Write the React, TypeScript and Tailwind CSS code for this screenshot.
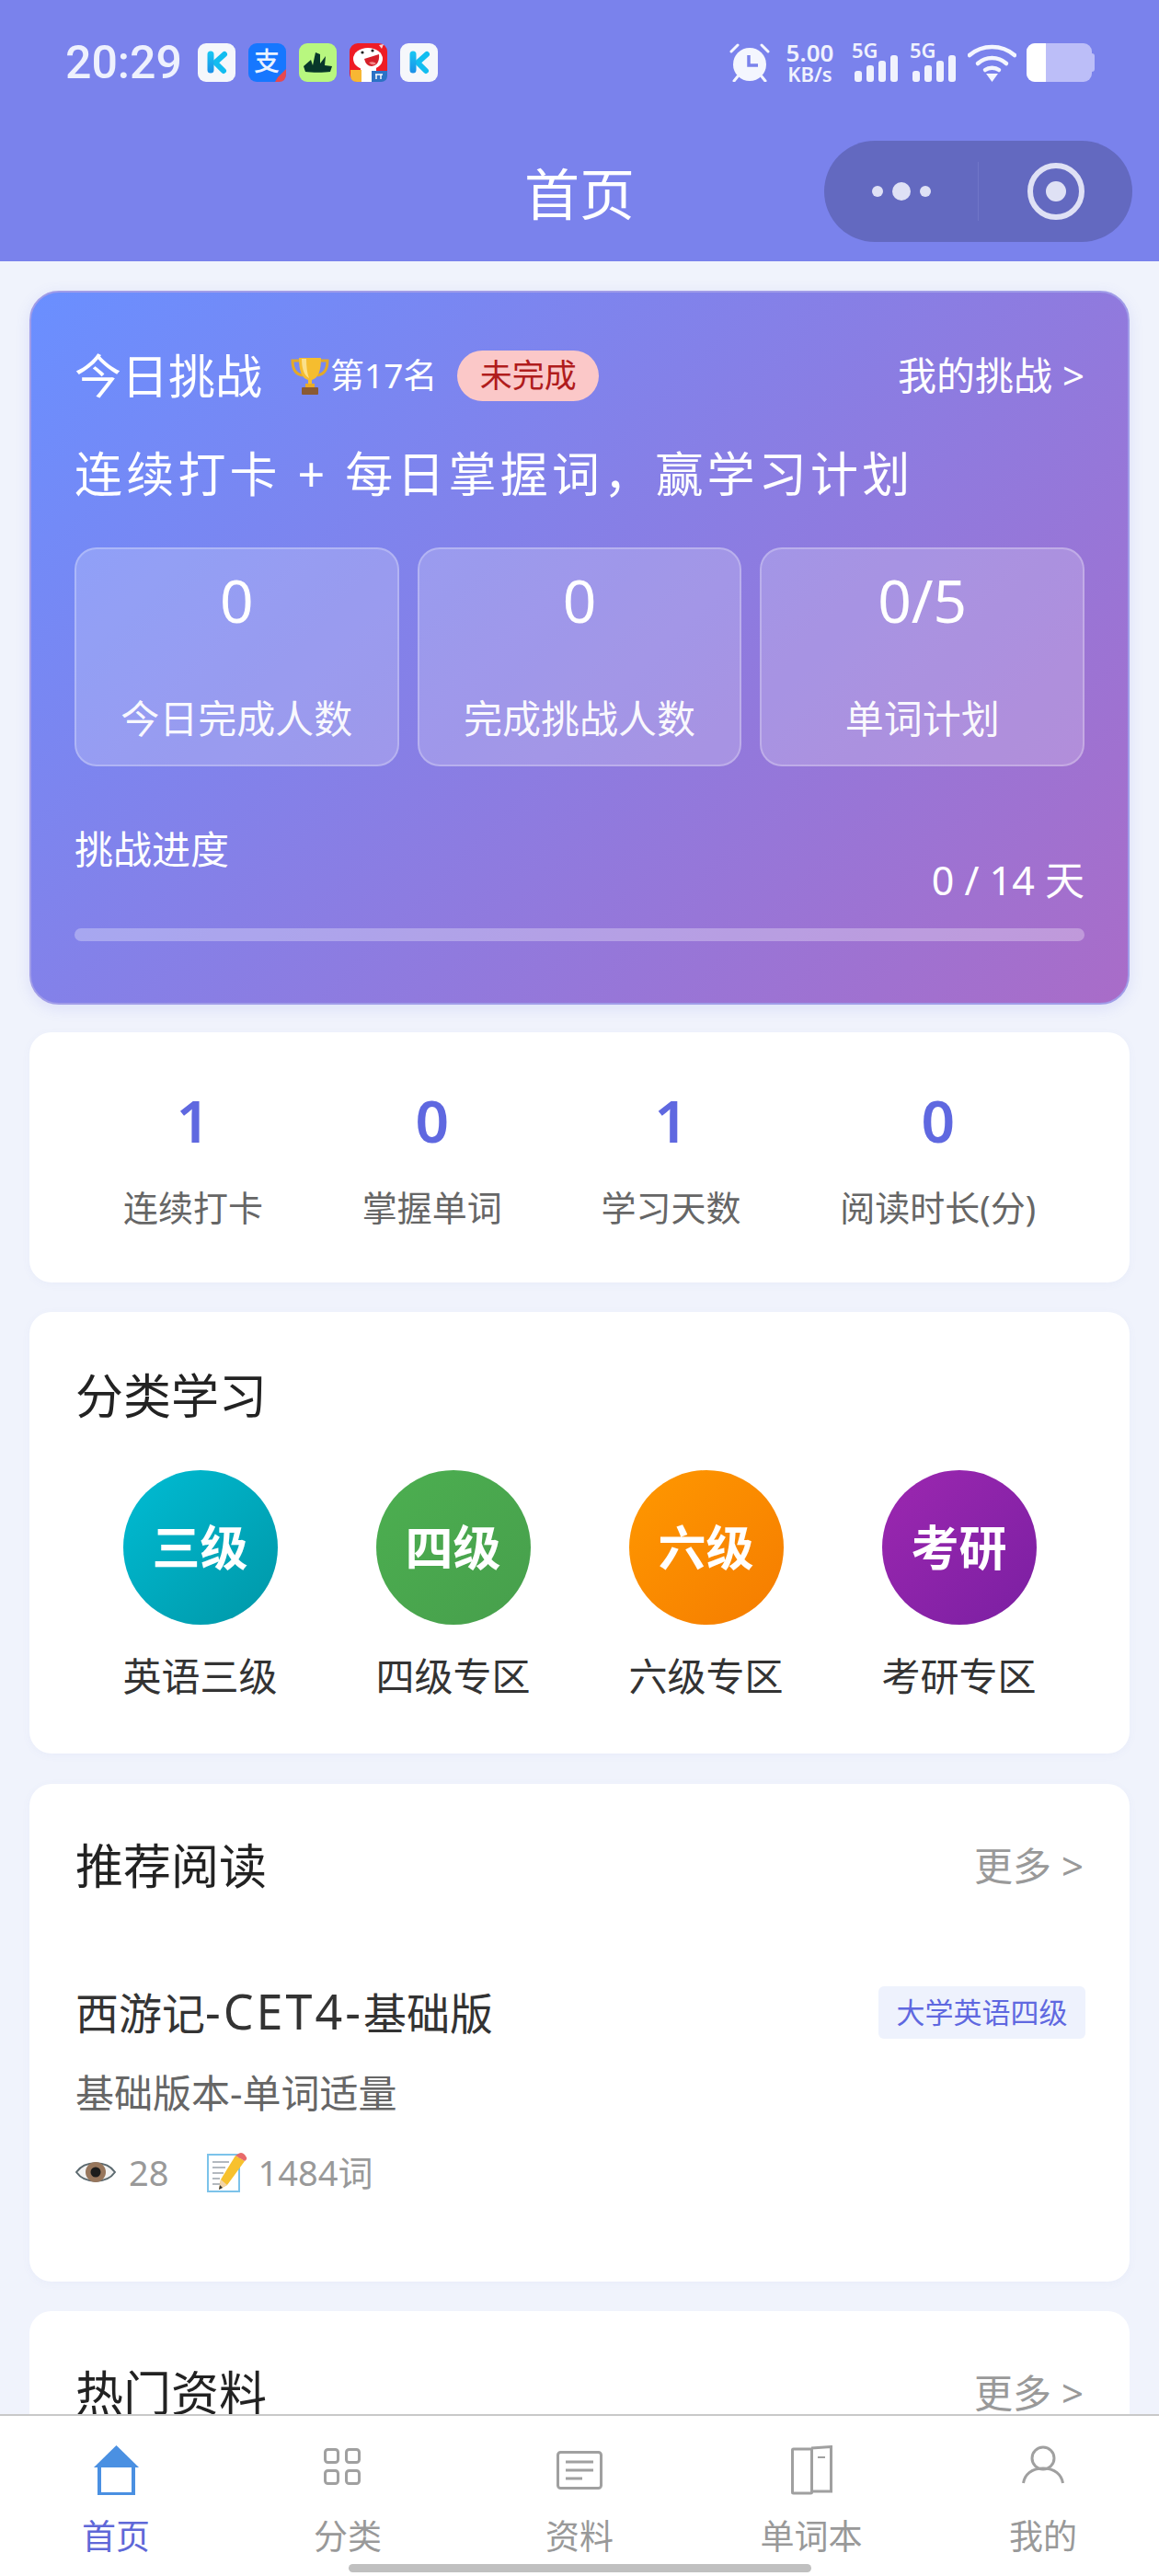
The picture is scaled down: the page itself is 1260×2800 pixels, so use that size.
import { ReactNode } from "react";

const stats = [
  { value: "1", label: "连续打卡" },
  { value: "0", label: "掌握单词" },
  { value: "1", label: "学习天数" },
  { value: "0", label: "阅读时长(分)" },
];

const challengeStats = [
  { value: "0", label: "今日完成人数" },
  { value: "0", label: "完成挑战人数" },
  { value: "0/5", label: "单词计划" },
];

const categories = [
  { badge: "三级", label: "英语三级", color: "from-[#00bcd4] to-[#0097a7]" },
  { badge: "四级", label: "四级专区", color: "from-[#4caf50] to-[#479f4c]" },
  { badge: "六级", label: "六级专区", color: "from-[#ff9800] to-[#f57c00]" },
  { badge: "考研", label: "考研专区", color: "from-[#9c27b0] to-[#7b1fa2]" },
];

function KIcon({ id }: { id: string }) {
  return (
    <svg width="41" height="42" viewBox="0 0 41 42">
      <defs>
        <linearGradient id={id} gradientUnits="userSpaceOnUse" x1="0" y1="10" x2="0" y2="32">
          <stop offset="0" stopColor="#19c5f2" />
          <stop offset="1" stopColor="#1a8fe8" />
        </linearGradient>
      </defs>
      <rect width="41" height="42" rx="9" fill="#f5f7fb" />
      <path d="M29 12L19 21L28 30" stroke="#12bdf0" strokeWidth="6" strokeLinecap="round" strokeLinejoin="round" fill="none" />
      <path d="M14 12V29" stroke={`url(#${id})`} strokeWidth="7" strokeLinecap="round" />
    </svg>
  );
}

function AlipayIcon() {
  return (
    <svg width="41" height="42" viewBox="0 0 41 42">
      <rect width="41" height="42" rx="9" fill="#1677ff" />
      <text x="20" y="30" textAnchor="middle" fontSize="28" fontWeight="500" fill="#eaf3ff" fontFamily="Noto Sans CJK SC">支</text>
      <path d="M32 37L41 28V33Q41 42 33 42H29Z" fill="#e8484d" />
    </svg>
  );
}

function GreenIcon() {
  return (
    <svg width="41" height="42" viewBox="0 0 41 42">
      <rect width="41" height="42" rx="9" fill="#b8f77f" />
      <path d="M5 25L13 18L15 24L18 10L23 12L23 22L29 14L28 24L36 25L34 31C28 32 13 32 7 31Z" fill="#07372a" />
    </svg>
  );
}

function JdIcon() {
  return (
    <svg width="41" height="42" viewBox="0 0 41 42">
      <rect width="41" height="42" rx="9" fill="#ee1c25" />
      <ellipse cx="20" cy="17" rx="16" ry="12" fill="#fff" />
      <path d="M16 17L32 12Q33 24 24 25Q18 25 16 17Z" fill="#d5202a" />
      <path d="M21 21Q26 19 29 22Q25 25 21 21Z" fill="#f68a8a" />
      <circle cx="14" cy="10" r="1.6" fill="#222" />
      <circle cx="25" cy="8" r="1.6" fill="#222" />
      <path d="M32 2L37 1L35 6Z" fill="#f5d3d3" />
      <rect x="12" y="27" width="17" height="15" fill="#fff" />
      <path d="M1 29H13V42H8Q1 42 1 35Z" fill="#f7b733" />
      <path d="M24 30H41V35Q41 42 34 42H24Z" fill="#2b72c6" />
      <path d="M28 34H36M29 34V39M34 34V39" stroke="#fff" strokeWidth="1.4" />
    </svg>
  );
}

function AlarmIcon() {
  return (
    <svg width="44" height="42" viewBox="0 0 44 42">
      <circle cx="22" cy="23" r="18" fill="#f4f6fe" />
      <path d="M2 9L9 2M42 9L35 2M9 36L5 41M35 36L39 41" stroke="#f4f6fe" strokeWidth="3" strokeLinecap="round" />
      <path d="M21 13V24H31" stroke="#7a82ec" strokeWidth="3.5" fill="none" />
    </svg>
  );
}

function SignalBars() {
  return (
    <svg width="47" height="29" viewBox="0 0 47 29">
      <rect x="0" y="17" width="8" height="12" rx="3" fill="#f0f2fd" />
      <rect x="13" y="11" width="8" height="18" rx="3" fill="#f0f2fd" />
      <rect x="26" y="6" width="8" height="23" rx="3" fill="#f0f2fd" />
      <rect x="39" y="0" width="8" height="29" rx="3" fill="#f0f2fd" />
    </svg>
  );
}

function SimSignal() {
  return (
    <div className="flex h-[42px] w-[50px] flex-col items-start">
      <span className="h-[13px] text-[22px] leading-[15px] font-semibold text-[#f0f2fd]">5G</span>
      <div className="ml-[3px]">
        <SignalBars />
      </div>
    </div>
  );
}

function WifiIcon() {
  return (
    <svg width="53" height="42" viewBox="0 0 53 42" fill="none">
      <path d="M2 13C16 1 37 1 51 13" stroke="#f4f6fe" strokeWidth="4.5" strokeLinecap="round" />
      <path d="M11 22C20 14 33 14 42 22" stroke="#f4f6fe" strokeWidth="4.5" strokeLinecap="round" />
      <path d="M19 29C23 26 30 26 34 29" stroke="#f4f6fe" strokeWidth="4.5" strokeLinecap="round" />
      <path d="M20 33H33L26.5 42Z" fill="#f4f6fe" />
    </svg>
  );
}

function Battery() {
  return (
    <div className="flex items-center">
      <div className="flex h-[42px] w-[71px] overflow-hidden rounded-[9px] bg-[#bcbef8]">
        <div className="w-[21px] bg-white" />
      </div>
      <div className="h-[20px] w-[3px] rounded-r-[3px] bg-[#bcbef8]" />
    </div>
  );
}

function Trophy() {
  return (
    <svg width="44" height="42" viewBox="0 0 44 42" fill="none">
      <path d="M10 5H3C3 15 7 20 14 21M34 5H41C41 15 37 20 30 21" stroke="#e3a928" strokeWidth="3" />
      <path d="M10 2H34C34 16 31 24 24 26V31H20V26C13 24 10 16 10 2Z" fill="#f5bd2f" />
      <path d="M13 3H18C18 12 19 19 21 24C15 21 13 12 13 3Z" fill="#fbe08a" />
      <rect x="17" y="30" width="10" height="4" fill="#e8ab2a" />
      <rect x="13" y="34" width="18" height="8" rx="1" fill="#8a5a33" />
    </svg>
  );
}

function EyeEmoji() {
  return (
    <svg width="44" height="28" viewBox="0 0 44 28">
      <path d="M1 14C10 1 34 1 43 14C34 27 10 27 1 14Z" fill="#f3f3f3" stroke="#5c6a70" strokeWidth="2" />
      <circle cx="22" cy="14" r="11" fill="#97765c" />
      <circle cx="22" cy="14" r="5.5" fill="#1c1c1c" />
    </svg>
  );
}

function MemoEmoji() {
  return (
    <svg width="44" height="44" viewBox="0 0 44 44">
      <rect x="1" y="3" width="34" height="40" fill="#fff" stroke="#7cc3ea" strokeWidth="2" />
      <path d="M6 11H24M6 17H20M6 23H18M6 29H14M6 35H16" stroke="#9aa3aa" strokeWidth="1.4" />
      <path d="M31 4L41 10L22 36L13 41L15 30Z" fill="#f7c12e" />
      <path d="M31 4L35 1.5Q38 0 41 3L43 6Q44 8 41 10Z" fill="#e86a6a" />
      <path d="M13 41L15 30L22 36Z" fill="#f2d4a8" />
      <path d="M13 41L14 36L17 39Z" fill="#333" />
    </svg>
  );
}

function HomeIcon() {
  return (
    <svg width="49" height="54" viewBox="0 0 49 54">
      <path d="M24.5 0L49 24H0Z" fill="#4a90e2" />
      <rect x="6" y="22" width="37" height="31" fill="#fff" stroke="#4a90e2" strokeWidth="4" />
    </svg>
  );
}

function GridIcon() {
  return (
    <svg width="40" height="40" viewBox="0 0 40 40" fill="none" stroke="#a0a0a0" strokeWidth="3">
      <rect x="1.5" y="1.5" width="14" height="14" rx="3" />
      <rect x="24.5" y="1.5" width="14" height="14" rx="3" />
      <rect x="1.5" y="24.5" width="14" height="14" rx="3" />
      <rect x="24.5" y="24.5" width="14" height="14" rx="3" />
    </svg>
  );
}

function DocIcon() {
  return (
    <svg width="50" height="42" viewBox="0 0 50 42" fill="none" stroke="#a0a0a0" strokeWidth="3">
      <rect x="1.5" y="1.5" width="47" height="39" rx="3" />
      <path d="M10 12H40M10 21H40M10 30H28" />
    </svg>
  );
}

function BookIcon() {
  return (
    <svg width="45" height="54" viewBox="0 0 45 54" fill="none" stroke="#a0a0a0" strokeWidth="3">
      <rect x="1.5" y="4" width="21" height="48" rx="1" />
      <path d="M22 3L43.5 1.5V50H22" />
      <path d="M29 13H37" strokeWidth="2" />
    </svg>
  );
}

function UserIcon() {
  return (
    <svg width="46" height="42" viewBox="0 0 46 42" fill="none" stroke="#a0a0a0" strokeWidth="3">
      <circle cx="23" cy="14" r="12" />
      <path d="M1.5 41C3 32 10 25 23 25C36 25 43 32 44.5 41" />
    </svg>
  );
}

const tabs: { label: string; icon: ReactNode; nudge?: string; active?: boolean }[] = [
  { label: "首页", icon: <HomeIcon />, active: true },
  { label: "分类", icon: <GridIcon />, nudge: "-translate-x-[6px] -translate-y-[4px]" },
  { label: "资料", icon: <DocIcon /> },
  { label: "单词本", icon: <BookIcon /> },
  { label: "我的", icon: <UserIcon />, nudge: "-translate-y-[6px]" },
];

function CardHeader({ title, more }: { title: string; more?: boolean }) {
  return (
    <div className="flex h-[60px] items-center justify-between">
      <span className="text-[52px] leading-[60px] text-[#222]">{title}</span>
      {more && <span className="text-[42px] leading-[60px] text-[#999]">更多 &gt;</span>}
    </div>
  );
}

export default function App() {
  return (
    <div className="flex h-[2800px] w-[1260px] flex-col overflow-hidden bg-[#f0f3fc] font-['Noto_Sans','Noto_Sans_CJK_SC',sans-serif]">
      <header className="h-[284px] shrink-0 bg-[#7a82ec] pt-[47px]">
        <div className="flex h-[42px] items-center pr-[70px] pl-[71px]">
          <span className="w-[124px] font-['Roboto','Noto_Sans',sans-serif] text-[50px] leading-[42px] font-medium text-[#eef1fd]">20:29</span>
          <div className="ml-[20px] flex gap-[14px]">
            <KIcon id="k1" />
            <AlipayIcon />
            <GreenIcon />
            <JdIcon />
            <KIcon id="k2" />
          </div>
          <div className="ml-auto flex items-center">
            <AlarmIcon />
            <div className="mr-[19px] ml-[17px] flex w-[53px] flex-col items-center text-[#f0f2fd]">
              <span className="h-[20px] text-[26px] leading-[20px] font-semibold">5.00</span>
              <span className="mt-[4px] h-[18px] text-[22px] leading-[18px] font-semibold">KB/s</span>
            </div>
            <SimSignal />
            <div className="ml-[13px]">
              <SimSignal />
            </div>
            <div className="mr-[11px] ml-[13px]">
              <WifiIcon />
            </div>
            <Battery />
          </div>
        </div>
        <div className="mt-[64px] grid h-[110px] grid-cols-[1fr_auto_1fr] items-center">
          <div />
          <h1 className="pt-[6px] text-[60px] leading-[104px] font-normal text-white">首页</h1>
          <div className="flex justify-end pr-[29px]">
            <div className="flex h-[110px] w-[335px] items-center rounded-full bg-[#6369c0]">
              <div className="flex w-[167px] items-center justify-center gap-[10px]">
                <span className="size-[12px] rounded-full bg-[#dfe1f5]" />
                <span className="size-[20px] rounded-full bg-[#dfe1f5]" />
                <span className="size-[12px] rounded-full bg-[#dfe1f5]" />
              </div>
              <div className="h-[64px] w-px bg-[#7076c8]" />
              <div className="flex flex-1 justify-center">
                <div className="flex size-[62px] items-center justify-center rounded-full border-[6px] border-[#dfe1f5]">
                  <span className="size-[22px] rounded-full bg-[#dfe1f5]" />
                </div>
              </div>
            </div>
          </div>
        </div>
      </header>

      <main className="min-h-0 flex-1 overflow-hidden px-[32px] pt-[32px]">
        <section className="box-border h-[776px] rounded-[32px] border-2 border-[#a09ce8] bg-[linear-gradient(135deg,#6a8fff_0%,#a96cc8_100%)] pt-[60px] pr-[47px] pl-[47px] text-white shadow-[0_4px_16px_rgba(100,110,230,0.15)]">
          <div className="flex h-[60px] items-center">
            <span className="text-[51px] leading-[60px]">今日挑战</span>
            <span className="ml-[30px]">
              <Trophy />
            </span>
            <span className="text-[37px] leading-[60px]">第17名</span>
            <span className="ml-[22px] flex h-[55px] w-[154px] items-center justify-center rounded-full bg-[#fbc8c8] text-[35px] text-[#b01c1c]">未完成</span>
            <span className="ml-auto text-[42px] leading-[60px]">我的挑战 &gt;</span>
          </div>
          <p className="mt-[47px] text-[52px] leading-[60px] tracking-[4.2px]">连续打卡 + 每日掌握词，赢学习计划</p>
          <div className="mt-[50px] grid h-[238px] grid-cols-3 gap-[20px]">
            {challengeStats.map((s) => (
              <div key={s.label} className="flex flex-col items-center rounded-[24px] border-2 border-white/25 bg-white/20 pt-[18px]">
                <span className="text-[64px] leading-[76px]">{s.value}</span>
                <span className="mt-[60px] text-[42px] leading-[60px] text-white/95">{s.label}</span>
              </div>
            ))}
          </div>
          <div className="mt-[60px] flex h-[94px] items-start justify-between">
            <span className="text-[42px] leading-[60px]">挑战进度</span>
            <span className="self-end text-[43px] leading-[60px]">0 / 14 天</span>
          </div>
          <div className="mt-[22px] h-[14px] rounded-full bg-white/30" />
        </section>

        <section className="mt-[30px] flex h-[272px] items-center justify-around rounded-[24px] bg-white px-[48px] shadow-[0_2px_10px_rgba(100,110,200,0.05)]">
          {stats.map((s) => (
            <div key={s.label} className="flex flex-col items-center">
              <span className="text-[64px] leading-[76px] font-semibold text-[#5f68e0]">{s.value}</span>
              <span className="mt-[31px] text-[38px] leading-[50px] text-[#666]">{s.label}</span>
            </div>
          ))}
        </section>

        <section className="mt-[32px] h-[480px] rounded-[24px] bg-white px-[50px] pt-[61px] shadow-[0_2px_10px_rgba(100,110,200,0.05)]">
          <CardHeader title="分类学习" />
          <div className="-mx-[2px] mt-[51px] grid grid-cols-4">
            {categories.map((c) => (
              <div key={c.label} className="flex flex-col items-center">
                <div className={`flex size-[168px] items-center justify-center rounded-full bg-gradient-to-br ${c.color} text-[52px] font-bold text-white`}>{c.badge}</div>
                <span className="mt-[26px] text-[42px] leading-[60px] text-[#333]">{c.label}</span>
              </div>
            ))}
          </div>
        </section>

        <section className="mt-[33px] h-[541px] rounded-[24px] bg-white px-[50px] pt-[59px] shadow-[0_2px_10px_rgba(100,110,200,0.05)]">
          <CardHeader title="推荐阅读" more />
          <div className="mt-[99px] flex h-[60px] items-center justify-between">
            <span className="text-[47px] leading-[60px] text-[#333]">
              西游记<span className="text-[52px] tracking-[3px]">-CET4-</span>基础版
            </span>
            <span className="-mr-[2px] flex h-[57px] w-[225px] items-center justify-center rounded-[6px] bg-[#eef2fd] text-[31px] text-[#5f68e0]">大学英语四级</span>
          </div>
          <p className="mt-[28px] text-[42px] leading-[60px] text-[#666]">基础版本-单词适量</p>
          <div className="mt-[26px] flex h-[60px] items-center text-[38px] text-[#999]">
            <EyeEmoji />
            <span className="ml-[14px]">28</span>
            <span className="ml-[42px]">
              <MemoEmoji />
            </span>
            <span className="ml-[11px]">1484词</span>
          </div>
        </section>

        <section className="mt-[32px] h-[300px] rounded-[24px] bg-white px-[50px] pt-[59px]">
          <CardHeader title="热门资料" more />
        </section>
      </main>

      <nav className="h-[176px] shrink-0 border-t-2 border-[#c9c9c9] bg-white pt-[29px]">
        <div className="grid grid-cols-5">
          {tabs.map((t) => (
            <div key={t.label} className="flex flex-col items-center">
              <div className={`flex h-[60px] items-center justify-center ${t.nudge ?? ""}`}>{t.icon}</div>
              <span className={`mt-[20px] text-[37px] leading-[44px] ${t.active ? "text-[#5f68d8]" : "text-[#999]"}`}>{t.label}</span>
            </div>
          ))}
        </div>
        <div className="mx-auto mt-[8px] h-[9px] w-[503px] rounded-full bg-[#c0c0c0]" />
      </nav>
    </div>
  );
}
